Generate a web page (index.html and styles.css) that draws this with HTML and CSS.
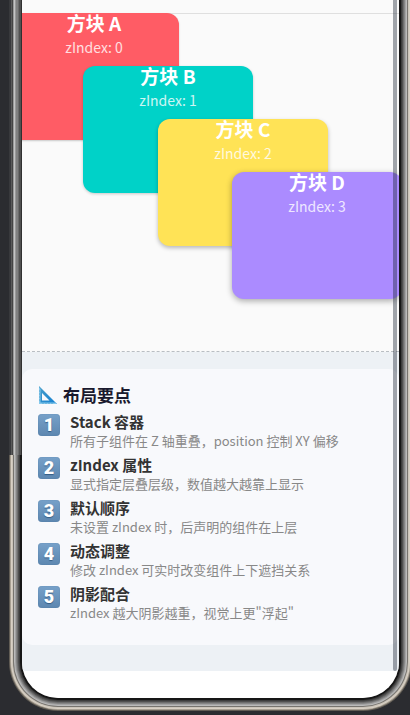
FILE: index.html
```html
<!DOCTYPE html>
<html lang="zh-CN">
<head>
<meta charset="utf-8">
<meta name="viewport" content="width=device-width, initial-scale=1">
<title>Stack 布局</title>
<link rel="stylesheet" href="styles.css">
</head>
<body>
<div class="device">
  <main class="screen">
    <section class="stage">
      <div class="block block-a"><h2>方块 A</h2><p>zIndex: 0</p></div>
      <div class="block block-b"><h2>方块 B</h2><p>zIndex: 1</p></div>
      <div class="block block-c"><h2>方块 C</h2><p>zIndex: 2</p></div>
      <div class="block block-d"><h2>方块 D</h2><p>zIndex: 3</p></div>
    </section>
    <section class="panel">
      <div class="card">
        <h1 class="card-title">
          <svg class="ruler" viewBox="0 0 20 20" aria-hidden="true">
            <defs><linearGradient id="r" x1="0" y1="0" x2="1" y2="1"><stop offset="0" stop-color="#4b9fc9"/><stop offset="1" stop-color="#0f7ed2"/></linearGradient></defs>
            <path fill="url(#r)" fill-rule="evenodd" d="M1 1 19 19H1ZM4 8V15.500H11.500Z"/>
            <path fill="#86c9ec" d="M1 2 2.500 4V17.500H17.500L19 19H1Z"/>
            <path stroke="#3d8fc0" stroke-width=".6" d="M1 6h1M1 9h1M1 12h1M1 15h1M5 19v-1M8 19v-1M11 19v-1M14 19v-1"/>
          </svg>
          布局要点
        </h1>
        <ol class="points">
          <li><span class="num">1</span><div><h3>Stack 容器</h3><p>所有子组件在 Z 轴重叠，position 控制 XY 偏移</p></div></li>
          <li><span class="num">2</span><div><h3>zIndex 属性</h3><p>显式指定层叠层级，数值越大越靠上显示</p></div></li>
          <li><span class="num">3</span><div><h3>默认顺序</h3><p>未设置 zIndex 时，后声明的组件在上层</p></div></li>
          <li><span class="num">4</span><div><h3>动态调整</h3><p>修改 zIndex 可实时改变组件上下遮挡关系</p></div></li>
          <li><span class="num">5</span><div><h3>阴影配合</h3><p>zIndex 越大阴影越重，视觉上更"浮起"</p></div></li>
        </ol>
      </div>
    </section>
    <div class="scrollbar"></div>
  </main>
  <div class="edge"></div>
</div>
</body>
</html>
```
FILE: styles.css
```css
* {
  box-sizing: border-box;
}

body {
  margin: 0;
  overflow: hidden;
  background: #2b2c30;
  font-family: "Noto Sans CJK SC", "Noto Sans", sans-serif;
}

h1, h2, h3, p, ol {
  margin: 0;
  padding: 0;
}

.device {
  position: relative;
  padding: 0 11px 17px 22px;
}

.screen {
  position: relative;
  overflow: clip;
  padding: 13px 0 27px;
  border-radius: 0 0 36px 36px;
  background: linear-gradient(#fafafa 50%, #fff 50%);
}

/* Metal rim: concentric bands from the glass outwards */
.device::before {
  content: "";
  position: absolute;
  inset: 0 11px 17px 22px;
  border-radius: 0 0 36px 36px;
  box-shadow:
    0 0 0 2px #161616,
    0 0 0 3px #3c3c3c,
    0 0 0 4px #505050,
    0 0 0 5px #6e6e6e,
    0 0 0 6px #858585,
    0 0 0 7px #a2a2a2,
    0 0 0 8px #bababa,
    0 0 0 9px #77746f,
    0 0 0 10px #cbc4b9,
    0 0 0 11px #d8d0c4,
    0 0 0 12px #a79f92,
    0 0 0 13px #625d55;
}

.edge {
  position: absolute;
  inset: 0 auto auto 9px;
  width: 13px;
  height: 455px;
  background: linear-gradient(90deg, #38393c 0 2px, #5a5a5a 2px 3px, #444 3px 4px, #999 4px 5px, #c4c4c4 5px 6px, #999 6px 7px, #808080 7px 9px, #6a6a6a 9px 10px, #505050 10px 12px, #303030 12px);
}

.stage {
  position: relative;
  height: 339px;
  border-bottom: 1px dashed #b9bec3;
  background: #fafafa;
  box-shadow: inset 0 1px #dfdfdf;
}

.block {
  position: absolute;
  width: 170px;
  height: 127px;
  border-radius: 12px;
  color: #fff;
  text-align: center;
}

.block h2 {
  font-size: 19px;
  line-height: 20px;
}

.block p {
  margin-top: 5px;
  font-size: 14px;
  line-height: 18px;
  opacity: .8;
}

.block-a {
  left: -13px;
  top: 0;
  z-index: 0;
  background: #ff5c65;
  box-shadow: 0 1px 2px #0003;
}

.block-b {
  left: 61px;
  top: 53px;
  z-index: 1;
  background: #00d2c8;
  box-shadow: 0 1px 3px #0003;
}

.block-c {
  left: 136px;
  top: 106px;
  z-index: 2;
  background: #ffe356;
  box-shadow: 0 2px 4px #0004;
}

.block-d {
  left: 210px;
  top: 159px;
  z-index: 3;
  background: #ab8bff;
  box-shadow: 0 2px 6px #0005;
}

.panel {
  padding: 17px 0 26px;
  background: #edf1f5;
}

.card {
  padding: 14px 16px 18px;
  border-radius: 10px;
  background: #f8f9fc;
}

.card-title {
  display: flex;
  align-items: center;
  gap: 5px;
  color: #1a1a2e;
  font-size: 17px;
  line-height: 24px;
}

.ruler {
  width: 20px;
  height: 20px;
}

.points {
  list-style: none;
  margin-top: 5px;
}

.points li {
  display: flex;
  gap: 10px;
  height: 43px;
}

.num {
  flex: none;
  width: 22px;
  height: 22px;
  margin-top: 2px;
  border-radius: 4px;
  background: linear-gradient(#77a1c9, #5d87b0);
  box-shadow: inset 0 0 1px #48729b;
  color: #fff;
  font: 900 18px/22px Roboto, sans-serif;
  text-align: center;
  text-shadow: 0 1px 1px #345d85;
}

.points h3 {
  color: #333;
  font-size: 15px;
  line-height: 20px;
}

.points p {
  color: #888;
  font-size: 13px;
  line-height: 18px;
  white-space: nowrap;
}

.scrollbar {
  position: absolute;
  inset: 0 2px 27px auto;
  width: 4px;
  z-index: 4;
  border-radius: 0 0 2px 2px;
  background: #18243166;
}
```
